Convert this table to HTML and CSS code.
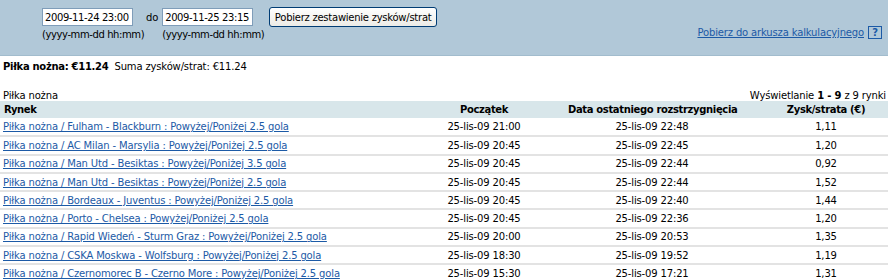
FILE: index.html
```html
<!DOCTYPE html>
<html lang="pl">
<head>
<meta charset="utf-8">
<link rel="stylesheet" href="styles.css">
</head>
<body>
<div class="panel">
  <div class="range">
    <div class="field">
      <input class="date" type="text" value="2009-11-24 23:00">
      <span class="hint">(yyyy-mm-dd hh:mm)</span>
    </div>
    <span class="do">do</span>
    <div class="field">
      <input class="date" type="text" value="2009-11-25 23:15">
      <span class="hint">(yyyy-mm-dd hh:mm)</span>
    </div>
    <button class="btn" type="button">Pobierz zestawienie zysków/strat</button>
  </div>
  <div class="export">
    <a href="#" class="link">Pobierz do arkusza kalkulacyjnego</a>
    <span class="help">?</span>
  </div>
</div>
<div class="summary"><b>Piłka nożna: €11.24</b> <span>Suma zysków/strat: €11.24</span></div>
<div class="caption">
  <span>Piłka nożna</span>
  <span>Wyświetlanie <b>1 - 9</b> z 9 rynki</span>
</div>
<table class="grid">
  <thead>
    <tr><th class="c-market">Rynek</th><th class="c-start">Początek</th><th class="c-settle">Data ostatniego rozstrzygnięcia</th><th class="c-pl">Zysk/strata (€)</th></tr>
  </thead>
  <tbody>
    <tr><td><a href="#">Piłka nożna / Fulham - Blackburn : Powyżej/Poniżej 2.5 gola</a></td><td>25-lis-09 21:00</td><td>25-lis-09 22:48</td><td class="c-pl">1,11</td></tr>
    <tr><td><a href="#">Piłka nożna / AC Milan - Marsylia : Powyżej/Poniżej 2.5 gola</a></td><td>25-lis-09 20:45</td><td>25-lis-09 22:45</td><td class="c-pl">1,20</td></tr>
    <tr><td><a href="#">Piłka nożna / Man Utd - Besiktas : Powyżej/Poniżej 3.5 gola</a></td><td>25-lis-09 20:45</td><td>25-lis-09 22:44</td><td class="c-pl">0,92</td></tr>
    <tr><td><a href="#">Piłka nożna / Man Utd - Besiktas : Powyżej/Poniżej 2.5 gola</a></td><td>25-lis-09 20:45</td><td>25-lis-09 22:44</td><td class="c-pl">1,52</td></tr>
    <tr><td><a href="#">Piłka nożna / Bordeaux - Juventus : Powyżej/Poniżej 2.5 gola</a></td><td>25-lis-09 20:45</td><td>25-lis-09 22:40</td><td class="c-pl">1,44</td></tr>
    <tr><td><a href="#">Piłka nożna / Porto - Chelsea : Powyżej/Poniżej 2.5 gola</a></td><td>25-lis-09 20:45</td><td>25-lis-09 22:36</td><td class="c-pl">1,20</td></tr>
    <tr><td><a href="#">Piłka nożna / Rapid Wiedeń - Sturm Graz : Powyżej/Poniżej 2.5 gola</a></td><td>25-lis-09 20:00</td><td>25-lis-09 20:53</td><td class="c-pl">1,35</td></tr>
    <tr><td><a href="#">Piłka nożna / CSKA Moskwa - Wolfsburg : Powyżej/Poniżej 2.5 gola</a></td><td>25-lis-09 18:30</td><td>25-lis-09 19:52</td><td class="c-pl">1,19</td></tr>
    <tr><td><a href="#">Piłka nożna / Czernomorec B - Czerno More : Powyżej/Poniżej 2.5 gola</a></td><td>25-lis-09 15:30</td><td>25-lis-09 17:21</td><td class="c-pl">1,31</td></tr>
  </tbody>
</table>
</body>
</html>
```
FILE: styles.css
```css
* { box-sizing: border-box; }
body {
  margin: 0;
  font-family: "DejaVu Sans", Verdana, sans-serif;
  font-size: 10px;
  letter-spacing: -0.15px;
  color: #000;
  background: #fff;
}
.panel {
  background: #b1c8d8;
  height: 56px;
  display: flex;
  justify-content: space-between;
  align-items: flex-start;
  padding: 7px 6px 0 42px;
  border-bottom: 1px solid #a2bccd;
}
.range { display: flex; align-items: flex-start; }
.field { display: flex; flex-direction: column; width: 91px; }
.date {
  width: 91px;
  height: 18px;
  margin: 1px 0 0 0;
  padding: 0 2px;
  border: 1px solid #7f9db9;
  font: inherit;
  font-size: 10px;
  letter-spacing: -0.4px;
  color: #000;
  background: #fff;
}
.hint { margin-top: 3px; white-space: nowrap; letter-spacing: -0.4px; }
.do { margin: 5px 4px 0 13px; }
.btn {
  margin-left: 16px;
  height: 20px;
  width: 168px;
  padding: 0;
  font: inherit;
  font-size: 10px;
  letter-spacing: -0.25px;
  background: linear-gradient(#fff, #ecebe6);
  border: 1px solid #003c74;
  border-radius: 3px;
  color: #000;
}
.export { display: flex; align-items: center; gap: 4px; margin-top: 19px; }
.link { color: #1c5aa6; text-decoration: underline; }
.help {
  width: 14px; height: 13px;
  border: 1px solid #1c5aa6;
  color: #1c5aa6;
  font-weight: bold;
  font-size: 10px;
  display: flex; align-items: center; justify-content: center;
}
.summary { padding: 5px 3px 0; height: 30px; }
.summary b { font-size: 10px; letter-spacing: -0.3px; margin-right: 3px; }
.caption {
  display: flex; justify-content: space-between; padding: 0 2px 0 3px; height: 15px; align-items: flex-end;
}
.grid { width: 888px; border-collapse: collapse; table-layout: fixed; }
.grid th {
  background: #d8e6ea;
  height: 17px;
  font-weight: bold;
  font-size: 10px;
  letter-spacing: -0.35px;
  padding: 0;
  text-align: center;
  white-space: nowrap;
}
.grid th.c-market { text-align: left; padding-left: 4px; }
.grid td {
  height: 18.3px;
  padding: 0;
  text-align: center;
  white-space: nowrap;
  border-bottom: 2px solid #e3e3e3;
}
.grid td:first-child { text-align: left; padding-left: 3px; }
.grid .c-pl { padding-left: 28px; }
.grid a { color: #1c5aa6; }
.c-market { width: 400px; }
.c-start { width: 168px; }
.c-settle { width: 168px; }
```
